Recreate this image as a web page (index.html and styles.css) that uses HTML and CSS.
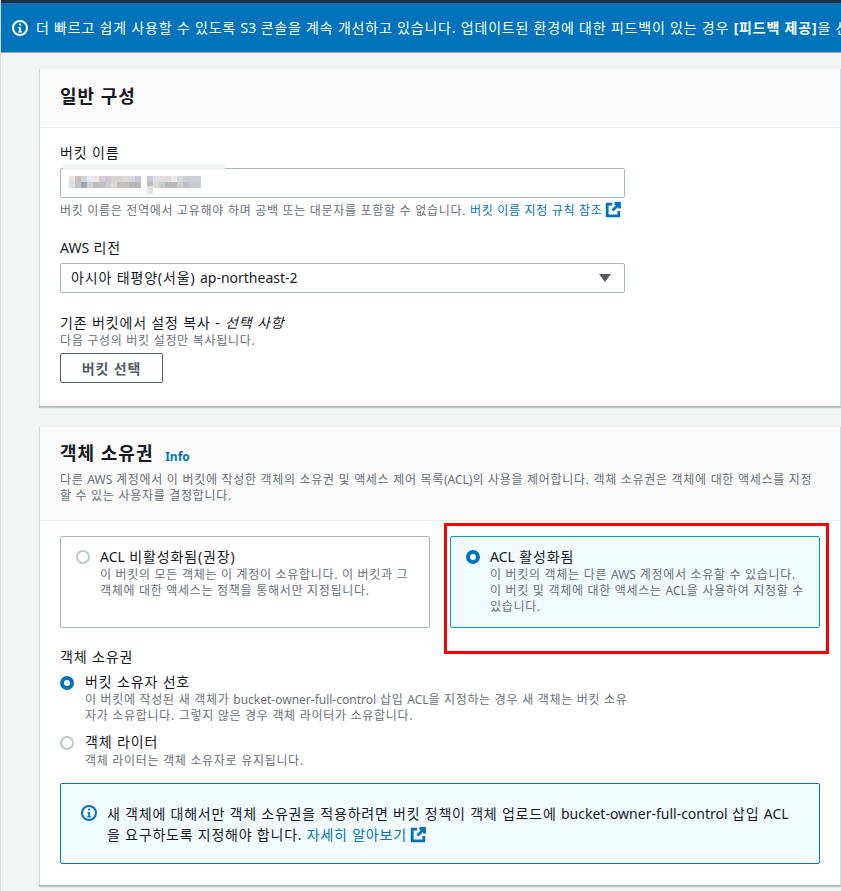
FILE: index.html
```html
<!DOCTYPE html>
<html lang="ko">
<head>
  <meta charset="utf-8">
  <title>버킷 만들기</title>
  <link rel="stylesheet" href="styles.css">
</head>

<body>
  <div class="top-bar"></div>

  <div class="banner">
    <svg class="icon-info" viewBox="0 0 16 16" width="16" height="16">
      <circle cx="8" cy="8" r="7" fill="none" stroke="#fff" stroke-width="2"/>
      <path d="M6.5 7h2.5v4.2h1v1.3H6.2v-1.3h1V8.2h-.7zM7.2 3.6h1.8v2H7.2z" fill="#fff"/>
    </svg>
    <span class="banner-text">더 빠르고 쉽게 사용할 수 있도록 <span class="en">S3</span> 콘솔을 계속 개선하고 있습니다. 업데이트된 환경에 대한 피드백이 있는 경우 <b>[피드백 제공]</b>을 선택하세요.</span>
  </div>

  <div class="content">
    <section class="card card-general">
      <div class="card-header header-general">
        <h2>일반 구성</h2>
      </div>
      <div class="card-body">
        <label class="field-label">버킷 이름</label>
        <div class="input-box">
          <span class="redacted"></span>
          <span class="redacted-tail"></span>
          <span class="redacted-strip"></span>
        </div>
        <p class="hint">버킷 이름은 전역에서 고유해야 하며 공백 또는 대문자를 포함할 수 없습니다. <a href="#">버킷 이름 지정 규칙 참조</a>
          <svg class="icon-ext" viewBox="0 0 16 16" width="16" height="16">
            <path d="M7 2.2H2.2v11.6h11.6V9" fill="none" stroke="#0073bb" stroke-width="2.8"/>
            <path d="M9.5 1.5h5V6.500M14 2L7.500 8.500" fill="none" stroke="#0073bb" stroke-width="2.8"/>
          </svg>
        </p>

        <label class="field-label label-region"><span class="en">AWS</span> 리전</label>
        <div class="input-box select-box">
          <span>아시아 태평양(서울) <span class="en">ap-northeast-2</span></span>
          <span class="caret"></span>
        </div>

        <label class="field-label label-copy">기존 버킷에서 설정 복사 - <i>선택 사항</i></label>
        <p class="hint hint-copy">다음 구성의 버킷 설정만 복사됩니다.</p>
        <button class="btn">버킷 선택</button>
      </div>
    </section>

    <section class="card card-owner">
      <div class="card-header header-owner">
        <h2>객체 소유권 <a class="info-link" href="#">Info</a></h2>
        <p class="hint">다른 <span class="en">AWS</span> 계정에서 이 버킷에 작성한 객체의 소유권 및 액세스 제어 목록<span class="en">(ACL)</span>의 사용을 제어합니다. 객체 소유권은 객체에 대한 액세스를 지정<br>할 수 있는 사용자를 결정합니다.</p>
      </div>
      <div class="card-body body-owner">
        <div class="tiles">
          <div class="tile">
            <span class="radio"></span>
            <div>
              <div class="tile-title"><span class="en">ACL</span> 비활성화됨(권장)</div>
              <p class="hint">이 버킷의 모든 객체는 이 계정이 소유합니다. 이 버킷과 그<br>객체에 대한 액세스는 정책을 통해서만 지정됩니다.</p>
            </div>
          </div>
          <div class="tile tile-on">
            <span class="radio radio-on"></span>
            <div>
              <div class="tile-title"><span class="en">ACL</span> 활성화됨</div>
              <p class="hint">이 버킷의 객체는 다른 <span class="en">AWS</span> 계정에서 소유할 수 있습니다.<br>이 버킷 및 객체에 대한 액세스는 <span class="en">ACL</span>을 사용하여 지정할 수<br>있습니다.</p>
            </div>
          </div>
          <div class="red-box"></div>
        </div>

        <label class="field-label label-owner">객체 소유권</label>
        <div class="option">
          <span class="radio radio-on"></span>
          <div>
            <div class="tile-title">버킷 소유자 선호</div>
            <p class="hint">이 버킷에 작성된 새 객체가 <span class="en">bucket-owner-full-control</span> 삽입 <span class="en">ACL</span>을 지정하는 경우 새 객체는 버킷 소유<br>자가 소유합니다. 그렇지 않은 경우 객체 라이터가 소유합니다.</p>
          </div>
        </div>
        <div class="option">
          <span class="radio"></span>
          <div>
            <div class="tile-title">객체 라이터</div>
            <p class="hint">객체 라이터는 객체 소유자로 유지됩니다.</p>
          </div>
        </div>

        <div class="alert">
          <svg class="icon-info" viewBox="0 0 16 16" width="16" height="16">
            <circle cx="8" cy="8" r="7" fill="none" stroke="#0073bb" stroke-width="2"/>
            <path d="M6.5 7h2.5v4.2h1v1.3H6.2v-1.3h1V8.2h-.7zM7.2 3.6h1.8v2H7.2z" fill="#0073bb"/>
          </svg>
          <p>새 객체에 대해서만 객체 소유권을 적용하려면 버킷 정책이 객체 업로드에 <span class="en">bucket-owner-full-control</span> 삽입 <span class="en">ACL</span><br>을 요구하도록 지정해야 합니다. <a href="#">자세히 알아보기</a>
            <svg class="icon-ext" viewBox="0 0 16 16" width="16" height="16">
              <path d="M7 2.2H2.2v11.6h11.6V9" fill="none" stroke="#0073bb" stroke-width="2.8"/>
              <path d="M9.5 1.5h5V6.500M14 2L7.500 8.500" fill="none" stroke="#0073bb" stroke-width="2.8"/>
            </svg>
          </p>
        </div>
      </div>
    </section>
  </div>
</body>
</html>
```

FILE: styles.css
```css
* {
  margin: 0;
  padding: 0;
  box-sizing: border-box;
}

html, body {
  height: 891px;
  overflow: hidden;
}

body {
  background: #f2f3f3;
  border-left: 1px solid #d5dbdb;
  color: #16191f;
  font-family: "Noto Sans", "Noto Sans CJK KR", sans-serif;
  font-size: 14px;
  line-height: 20px;
  letter-spacing: .85px;
}

a {
  color: #0073bb;
  text-decoration: none;
}

/* latin runs keep their normal width, only the hangul is opened up */
.en {
  letter-spacing: 0;
}

.top-bar {
  height: 3px;
  margin-left: -1px;
  background: #232f3e;
}

.banner {
  display: flex;
  align-items: center;
  gap: 8px;
  height: 50px;
  margin-left: -1px;
  padding-left: 12px;
  background: #0073bb;
  border-bottom: 1px solid #a0a6a8;
  color: #fff;
  font-size: 14px;
  letter-spacing: .8px;
  white-space: nowrap;
  overflow: hidden;
}

.banner svg {
  flex: none;
}

.content {
  padding: 16px 0 0 38px;
}

.card {
  background: #fff;
  border-left: 1px solid #d5dbdb;
  border-right: 1px solid #d5dbdb;
  border-bottom: 1px solid #aab7b8;
  box-shadow: 0 1px 1px rgba(0, 28, 36, .2);
}

.card-general {
  height: 338px;
  margin-bottom: 20px;
}

.card-owner {
  height: 459px;
}

.card-header {
  background: #fafafa;
  border-bottom: 1px solid #eaeded;
  padding: 0 20px;
}

.header-general {
  height: 59px;
  padding-top: 14px;
}

.header-owner {
  height: 94px;
  padding-top: 13px;
}

h2 {
  font-size: 18px;
  line-height: 26px;
  font-weight: 700;
  letter-spacing: 1px;
}

.info-link {
  margin-left: 6px;
  font-size: 12px;
  font-weight: 700;
  letter-spacing: 0;
  vertical-align: -1px;
}

.header-owner .hint {
  margin-top: 2px;
}

.card-body {
  padding: 15px 20px 0;
}

.field-label {
  display: block;
  line-height: 20px;
}

.input-box {
  position: relative;
  display: flex;
  align-items: center;
  width: 565px;
  height: 30px;
  margin-top: 5px;
  padding: 0 10px;
  background: #fff;
  border: 1px solid #aab7b8;
  border-radius: 2px;
}

/* blurred bucket name */
.redacted {
  display: block;
  width: 132px;
  height: 12px;
  margin: -2px 0 0 -2px;
  background:
    linear-gradient(90deg, #e3e3e6 0 6px, #cbbfb8 6px 12px, #d0d6de 12px 18px, #e6e8ee 18px 24px, #e9e9e9 24px 30px, #d6d0d4 30px 36px, #cdc9d6 36px 42px, #d8d4d2 42px 54px, #dcd8d6 54px 60px, #d8d8dc 60px 66px, #c9c9d0 66px 72px, #fff 72px 78px, #c8c8d6 78px 84px, #e0dce0 84px 90px, #e6dce0 90px 96px, #e4dcdc 96px 102px, #e8e8e8 102px 108px, #d8d8dc 108px 114px, #cdd0d8 114px 132px) top / 100% 6px no-repeat,
    linear-gradient(90deg, #dcdee0 0 6px, #c0c4c6 6px 12px, #9eaab2 12px 18px, #ced2d8 18px 24px, #c6bab2 24px 30px, #b8c0ca 30px 36px, #cccbd2 36px 42px, #d8d8d6 42px 48px, #c4c0c0 48px 60px, #b8b8b8 60px 72px, #fff 72px 78px, #bcbcc0 78px 84px, #d8dcd2 84px 90px, #c8ccc6 90px 96px, #b8b8bc 96px 108px, #d0cccc 108px 114px, #bcc0c8 114px 120px, #c8ccd0 120px 132px) bottom / 100% 6px no-repeat;
}

.redacted-tail {
  position: absolute;
  left: 86px;
  top: 17px;
  width: 6px;
  height: 8px;
  background: #e0e0e0;
}

.redacted-strip {
  position: absolute;
  left: 2px;
  top: -5px;
  width: 162px;
  height: 6px;
  background: #f2f3f3;
}

.hint {
  color: #687078;
  font-size: 12px;
  line-height: 16px;
  letter-spacing: .7px;
}

.input-box + .hint {
  margin-top: 4px;
}

.icon-ext {
  vertical-align: -3px;
  margin-left: -1px;
}

.label-region {
  margin-top: 19px;
}

.select-box {
  justify-content: space-between;
  margin-top: 5px;
}

.caret {
  width: 0;
  height: 0;
  margin-right: 3px;
  border-left: 6px solid transparent;
  border-right: 6px solid transparent;
  border-top: 8px solid #545b64;
}

.label-copy {
  margin-top: 20px;
}

.btn {
  display: block;
  width: 103px;
  height: 30px;
  margin-top: 4px;
  background: #fff;
  border: 1px solid #545b64;
  border-radius: 2px;
  color: #545b64;
  font-family: inherit;
  font-size: 14px;
  font-weight: 700;
  letter-spacing: .85px;
}

.tiles {
  position: relative;
  display: grid;
  grid-template-columns: 370px 370px;
  gap: 20px;
}

.tile {
  display: flex;
  gap: 10px;
  height: 92px;
  padding: 10px 15px;
  border: 1px solid #aab7b8;
  border-radius: 2px;
}

.tile-on {
  background: #f1faff;
  border-color: #00a1c9;
}

.tile-title {
  line-height: 20px;
}

.radio {
  flex: none;
  width: 14px;
  height: 14px;
  margin-top: 3px;
  background: #fff;
  border: 2px solid #bcc8c9;
  border-radius: 50%;
}

.radio-on {
  border: 4px solid #0073bb;
}

/* annotation drawn over the screenshot */
.red-box {
  position: absolute;
  left: 384px;
  top: -13px;
  width: 385px;
  height: 131px;
  border: 3px solid #f00;
}

.label-owner {
  margin-top: 19px;
}

.option {
  display: flex;
  gap: 11px;
  width: 600px;
  margin-top: 5px;
  white-space: nowrap;
}

.option .radio {
  margin-top: 4px;
}

.option + .option {
  margin-top: 8px;
}

.option + .option .hint {
  margin-top: 1px;
}

.alert {
  display: flex;
  gap: 10px;
  width: 760px;
  height: 81px;
  margin-top: 14px;
  padding: 19px 20px;
  background: #f1faff;
  border: 1px solid #0073bb;
  border-radius: 2px;
  letter-spacing: .78px;
  white-space: nowrap;
}

.alert svg.icon-info {
  flex: none;
  margin-top: 2px;
}

.alert p {
  line-height: 21px;
}
```
